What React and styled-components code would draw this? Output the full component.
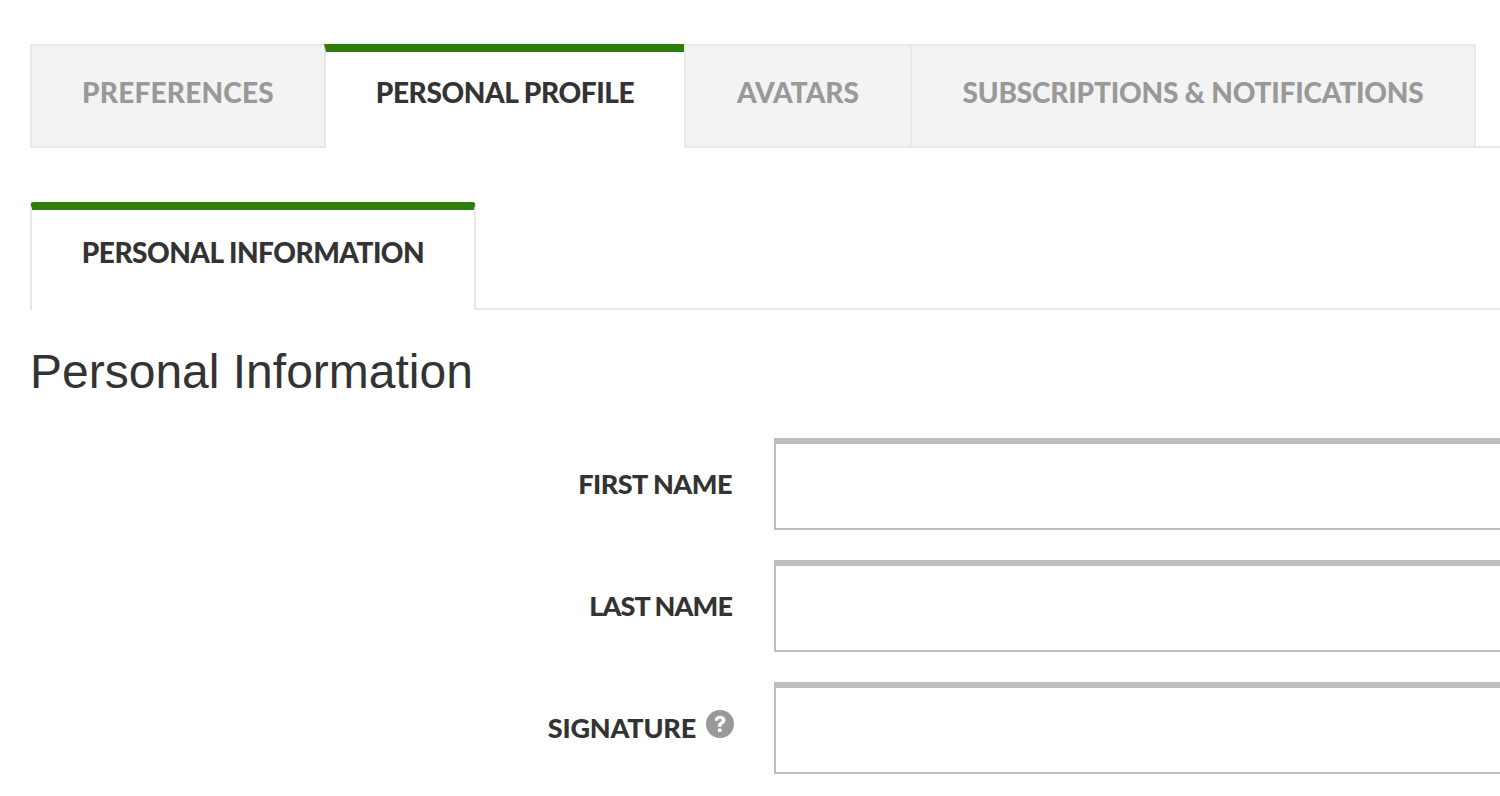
import React from "react";
import styled, { createGlobalStyle } from "styled-components";

const GlobalStyle = createGlobalStyle`
  html, body {
    margin: 0;
    padding: 0;
    height: 796px;
    overflow: hidden;
    background: #fff;
  }
`;

const Page = styled.div`
  width: 1500px;
  height: 796px;
  overflow: hidden;
  padding: 44px 0 0 30px;
  box-sizing: border-box;
  font-family: "Lato", "Liberation Sans", sans-serif;
`;

const TabBar = styled.div`
  display: flex;
  height: 104px;
  box-sizing: border-box;
  border-bottom: 2px solid #e8e8e8;
`;

const Tab = styled.div`
  box-sizing: border-box;
  width: ${(p) => p.$width}px;
  height: 104px;
  flex: none;
  display: flex;
  align-items: center;
  justify-content: center;
  font-size: 28px;
  font-weight: 900;
  letter-spacing: ${(p) => p.$spacing || 0}px;
  white-space: nowrap;
  color: #999;
  background: #f3f3f3;
  border: 2px solid #e8e8e8;
  border-right-width: ${(p) => (p.$noRight ? 0 : 2)}px;
  padding-bottom: 8px;
`;

const ActiveTab = styled(Tab)`
  position: relative;
  color: #333;
  background: #fff;
  border-top: 8px solid #2f7f0e;
  border-left: 0;
  border-right: 0;
  border-bottom: 0;
  padding-bottom: 16px;

  &::before {
    content: "";
    position: absolute;
    top: -8px;
    left: -2px;
    width: 2px;
    height: 8px;
    background: #2f7f0e;
    clip-path: polygon(0 0, 100% 0, 100% 100%);
  }
`;

const SubBar = styled.div`
  display: flex;
  height: 108px;
  margin-top: 54px;
  box-sizing: border-box;
  border-bottom: 2px solid #e8e8e8;
`;

const SubTab = styled.div`
  box-sizing: border-box;
  width: 446px;
  height: 108px;
  display: flex;
  align-items: center;
  justify-content: center;
  font-size: 28px;
  font-weight: 900;
  letter-spacing: -0.5px;
  white-space: nowrap;
  color: #333;
  background: #fff;
  border: 2px solid #e8e8e8;
  border-top: 8px solid #2f7f0e;
  border-bottom: 0;
  border-radius: 4px 4px 0 0;
  padding-bottom: 16px;
`;

const Heading = styled.h1`
  margin: 34px 0 0;
  font-family: "Liberation Sans", Arial, sans-serif;
  font-size: 48px;
  line-height: 56px;
  font-weight: 400;
  color: #333;
`;

const Form = styled.div`
  display: flex;
  flex-direction: column;
  gap: 30px;
  margin-top: 38px;
`;

const Row = styled.div`
  display: grid;
  grid-template-columns: 703px 800px;
  column-gap: 41px;
  align-items: center;
`;

const Label = styled.label`
  display: flex;
  justify-content: flex-end;
  align-items: center;
  gap: 10px;
  padding: 0 1px 2px 0;
  font-size: 27px;
  font-weight: 900;
  letter-spacing: ${(p) => p.$spacing || 0}px;
  color: #333;
  white-space: nowrap;
`;

const Input = styled.div`
  box-sizing: border-box;
  height: 92px;
  background: #fff;
  border: 2px solid #bebebe;
  border-top-width: 6px;
`;

const HelpIcon = styled.svg`
  width: 28px;
  height: 28px;
  margin: -6px -2px 0 0;
`;

const Help = () => (
  <HelpIcon viewBox="0 0 28 28">
    <circle cx="14" cy="14" r="14" fill="#999" />
    <path
      d="M8.6 10.8c.2-3.2 2.4-5 5.6-5 3 0 5.2 1.7 5.2 4.4 0 2-1.2 3-2.4 3.8-1.1.7-1.5 1.2-1.5 2.2v.6h-3.6v-.9c0-2 .8-3 2.2-3.9 1-.6 1.6-1 1.6-1.8 0-.8-.7-1.4-1.7-1.4-1.1 0-1.8.7-1.9 1.9z"
      fill="#fff"
    />
    <rect x="11.9" y="18.4" width="3.6" height="3.6" rx="0.6" fill="#fff" />
  </HelpIcon>
);

const App = () => {
  return (
    <Page>
      <GlobalStyle />
      <TabBar>
        <Tab $width={296} $spacing={0.2}>PREFERENCES</Tab>
        <ActiveTab $width={358} $spacing={-0.4}>PERSONAL PROFILE</ActiveTab>
        <Tab $width={226} $noRight>AVATARS</Tab>
        <Tab $width={566} $spacing={-0.2}>SUBSCRIPTIONS &amp; NOTIFICATIONS</Tab>
      </TabBar>
      <SubBar>
        <SubTab>PERSONAL INFORMATION</SubTab>
      </SubBar>
      <Heading>Personal Information</Heading>
      <Form>
        <Row>
          <Label $spacing={-0.5}>FIRST NAME</Label>
          <Input />
        </Row>
        <Row>
          <Label $spacing={-0.9}>LAST NAME</Label>
          <Input />
        </Row>
        <Row>
          <Label $spacing={-0.2}>
            SIGNATURE <Help />
          </Label>
          <Input />
        </Row>
      </Form>
    </Page>
  );
};

export default App;
